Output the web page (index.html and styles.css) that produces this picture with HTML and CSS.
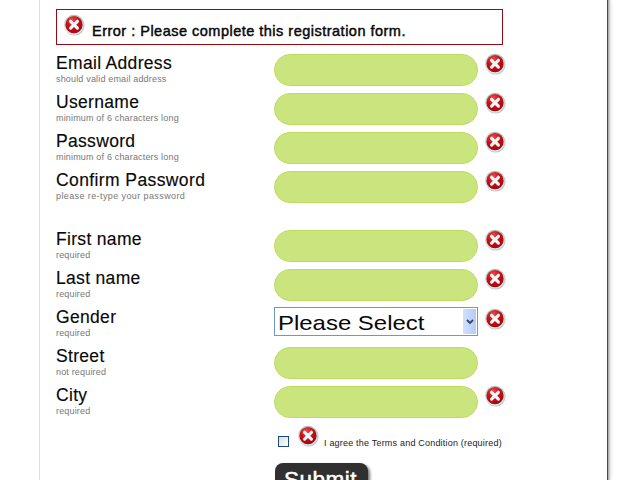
FILE: index.html
```html
<!DOCTYPE html>
<html lang="en">
<head>
<meta charset="utf-8">
<title>Registration</title>
<link rel="stylesheet" href="styles.css">
</head>
<body>
<svg class="defs" aria-hidden="true">
  <defs>
    <radialGradient id="red" cx="40%" cy="25%" r="80%">
      <stop offset="0" stop-color="#ee4a4a"/><stop offset=".45" stop-color="#cc1016"/><stop offset="1" stop-color="#a8000c"/>
    </radialGradient>
    <linearGradient id="rim" x1="0" y1="0" x2="0" y2="1">
      <stop offset="0" stop-color="#a9bcbc"/><stop offset=".5" stop-color="#c4e0e2"/><stop offset="1" stop-color="#d2eef0"/>
    </linearGradient>
    <symbol id="cross" viewBox="0 0 22 22">
      <circle cx="11.6" cy="11.6" r="10" fill="#777" opacity=".45"/>
      <circle cx="11" cy="10.7" r="10" fill="url(#rim)"/>
      <circle cx="11" cy="10.7" r="8.6" fill="url(#red)"/>
      <path d="M7.6 7.3l6.8 6.8M14.4 7.3l-6.8 6.8" stroke="#eef8f8" stroke-width="3.2" stroke-linecap="round"/>
    </symbol>
  </defs>
</svg>
<main class="page">
  <div class="error"><svg class="icon"><use href="#cross"/></svg><span>Error : Please complete this registration form.</span></div>
  <form class="form">
    <div class="row"><label><b>Email Address</b><small>should valid email address</small></label><span class="field"></span><svg class="icon"><use href="#cross"/></svg></div>
    <div class="row"><label><b>Username</b><small>minimum of 6 characters long</small></label><span class="field"></span><svg class="icon"><use href="#cross"/></svg></div>
    <div class="row"><label><b>Password</b><small>minimum of 6 characters long</small></label><span class="field"></span><svg class="icon"><use href="#cross"/></svg></div>
    <div class="row group-end"><label><b class="wide">Confirm Password</b><small class="wide">please re-type your password</small></label><span class="field"></span><svg class="icon"><use href="#cross"/></svg></div>
    <div class="row"><label><b>First name</b><small>required</small></label><span class="field"></span><svg class="icon"><use href="#cross"/></svg></div>
    <div class="row"><label><b>Last name</b><small>required</small></label><span class="field"></span><svg class="icon"><use href="#cross"/></svg></div>
    <div class="row gender"><label><b>Gender</b><small>required</small></label><span class="select"><span class="value">Please Select</span><span class="arrow"><svg width="8" height="6" viewBox="0 0 8 6"><path d="M1 1l3 3 3-3" fill="none" stroke="#34465f" stroke-width="1.8"/></svg></span></span><svg class="icon"><use href="#cross"/></svg></div>
    <div class="row"><label><b>Street</b><small>not required</small></label><span class="field"></span></div>
    <div class="row"><label><b>City</b><small>required</small></label><span class="field"></span><svg class="icon"><use href="#cross"/></svg></div>
    <div class="terms"><span class="check"></span><svg class="icon"><use href="#cross"/></svg><span class="agree">I agree the Terms and Condition (required)</span></div>
    <div class="submit"><span>Submit</span></div>
  </form>
</main>
</body>
</html>
```
FILE: styles.css
```css
* { box-sizing: border-box; }
body { margin: 0; height: 480px; overflow: hidden; background: #fff; font-family: "Liberation Sans", Arial, sans-serif; color: #080808; }
.defs { position: absolute; width: 0; height: 0; }
.page { margin-left: 39px; width: 569px; height: 480px; overflow: hidden; padding: 9px 0 0 16px; border-left: 1px solid #dedede; border-right: 1px solid #484848; box-shadow: 1px 0 0 #b0b0b0, 2px 0 1px #ccc, 4px 0 2px #eee; }
.icon { width: 22px; height: 22px; flex: none; }
.error { display: flex; width: 447px; height: 36px; border: 1px solid #960a12; padding: 4px 0 0 6px; }
.error span { margin-left: 7px; padding-top: 8px; font-size: 14.5px; line-height: 18px; white-space: nowrap; letter-spacing: .49px; -webkit-text-stroke: .45px #080808; }
.form { padding-top: 9px; }
.row { display: flex; height: 39px; align-items: flex-start; }
.group-end { margin-bottom: 20px; }
label { width: 218px; flex: none; white-space: nowrap; }
label b { display: block; font-weight: normal; font-size: 17.5px; line-height: 18px; letter-spacing: .32px; -webkit-text-stroke: .15px #080808; }
label small { display: block; font-size: 9px; line-height: 12px; margin-top: 1px; color: #777; letter-spacing: .17px; }
label .wide { letter-spacing: .4px; }
.field { width: 204px; height: 32px; border: 1px solid #bddc5f; border-radius: 16px; background: #cbe57e; }
.row .icon { margin: -1px 0 0 6px; }
.gender .icon { margin-top: 0; }
.select { display: flex; width: 204px; height: 29px; margin-top: -1px; border: 1px solid #7299bd; background: #fff; }
.value { flex: 1; padding-left: 3px; font-size: 21px; line-height: 30px; white-space: nowrap; transform: scaleX(1.14); transform-origin: 3px 0; }
.arrow { width: 13px; margin: 1px; display: flex; align-items: center; justify-content: center; background: linear-gradient(90deg, #d2e1ff, #b4cbf7); border-radius: 1px; }
.terms { display: flex; height: 38px; padding-left: 222px; }
.check { width: 11px; height: 11px; margin-top: 11px; border: 1px solid #1c4880; background: linear-gradient(135deg, #dcdcd8, #fff); }
.terms .icon { margin-left: 8px; }
.agree { margin: 12px 0 0 5px; font-size: 9px; line-height: 12px; white-space: nowrap; color: #222; letter-spacing: .2px; }
.submit { margin-left: 219px; width: 93px; height: 40px; border-radius: 8px; background: #303030; box-shadow: 2px 2px 3px #777; color: #fff; font-size: 22.5px; line-height: 33px; padding-left: 9px; letter-spacing: .5px; -webkit-text-stroke: .5px #fff; }
```
